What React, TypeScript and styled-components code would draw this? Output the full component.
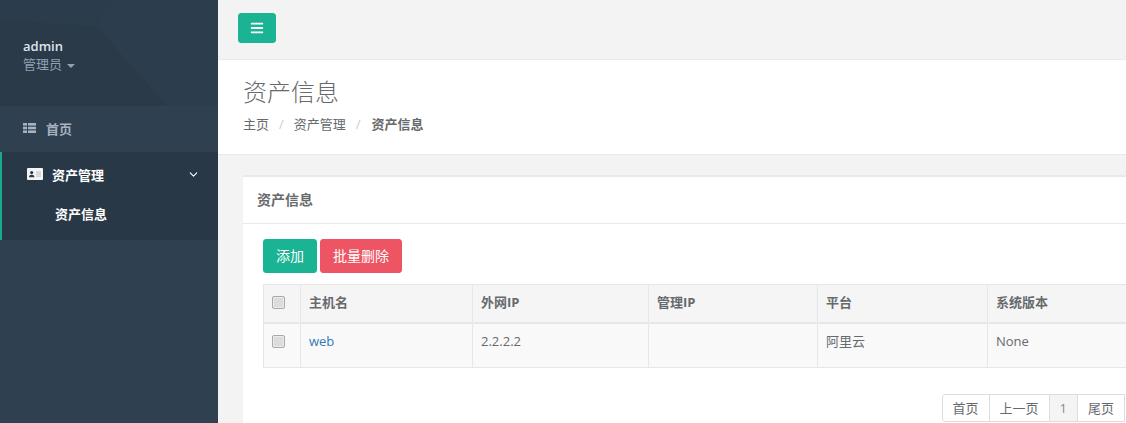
import React from "react";
import styled, { createGlobalStyle } from "styled-components";
import { FaBars } from "react-icons/fa";
import { ChevronDown } from "lucide-react";

const Global = createGlobalStyle`
  html, body { margin: 0; padding: 0; height: 423px; overflow: hidden; background: #2f4050; }
  body { font-family: "Open Sans", "Noto Sans CJK SC", "Liberation Sans", sans-serif; font-size: 13px; color: #676a6c; }
  * { box-sizing: border-box; }
`;

const Shell = styled.div`
  display: flex;
  width: 1126px;
  height: 423px;
  overflow: hidden;
`;

const Sidebar = styled.aside`
  flex: 0 0 218px;
  background: #2f4050;
`;

const Profile = styled.div`
  position: relative;
  height: 106px;
  padding: 38px 0 0 23px;
  background: #2b3c4c;
  overflow: hidden;
`;

const Pattern = styled.svg`
  position: absolute;
  left: 0;
  top: 0;
`;

const UserName = styled.div`
  position: relative;
  color: #dfe4ed;
  font-weight: 600;
  font-size: 13px;
  line-height: 17px;
`;

const Role = styled.div`
  position: relative;
  display: flex;
  align-items: center;
  gap: 5px;
  color: #8fa1b3;
  font-size: 13px;
  line-height: 19px;
`;

const Caret = styled.span`
  width: 0;
  height: 0;
  margin-top: 2px;
  border-left: 4px solid transparent;
  border-right: 4px solid transparent;
  border-top: 4px solid #8fa1b3;
`;

const HomeItem = styled.div`
  height: 46px;
  display: flex;
  align-items: center;
  padding: 0 0 2px 23px;
  gap: 10px;
  color: #a7b1c2;
  font-weight: 600;
`;

const ActiveGroup = styled.div`
  height: 88px;
  background: #293846;
  border-left: 2px solid #19aa8d;
  color: #fff;
  font-weight: 600;
`;

const GroupHead = styled.div`
  height: 46px;
  display: flex;
  align-items: center;
  padding: 0 18px 2px 25px;
  gap: 9px;
`;

const GroupLabel = styled.span`
  flex: 1;
`;

const SubItem = styled.div`
  padding-left: 53px;
  line-height: 18px;
  padding-top: 7px;
`;

const Main = styled.main`
  flex: 1;
  min-width: 0;
  background: #f3f3f4;
`;

const TopBar = styled.div`
  height: 60px;
  padding: 13px 0 0 20px;
  border-bottom: 1px solid #e7eaec;
`;

const MenuButton = styled.button`
  width: 38px;
  height: 30px;
  padding: 0;
  border: 1px solid #1ab394;
  border-radius: 3px;
  background: #1ab394;
  color: #fff;
  display: flex;
  align-items: center;
  justify-content: center;
`;

const Heading = styled.section`
  height: 95px;
  background: #fff;
  padding: 15px 0 0 25px;
  border-bottom: 1px solid #e7eaec;
`;

const Title = styled.h2`
  margin: 0;
  font-size: 24px;
  font-weight: 300;
  line-height: 33px;
  color: #676a6c;
`;

const Crumbs = styled.ol`
  display: flex;
  margin: 7px 0 0;
  padding: 0;
  list-style: none;
  line-height: 18px;
  color: #676a6c;
`;

const Crumb = styled.li<{ $strong?: boolean }>`
  font-weight: ${(p) => (p.$strong ? 700 : 400)};
  margin-left: ${(p) => (p.$strong ? "1px" : "0")};
`;

const Sep = styled.li`
  padding: 0 10px;
  color: #ccc;
`;

const Wrapper = styled.div`
  width: 1000px;
  padding: 20px 0 0 25px;
`;

const Card = styled.section`
  background: #fff;
  border-top: 2px solid #e7eaec;
  height: 300px;
`;

const CardTitle = styled.h5`
  margin: 0;
  height: 47px;
  padding: 0 0 0 14px;
  display: flex;
  align-items: center;
  font-size: 14px;
  font-weight: 600;
  line-height: 20px;
  color: #676a6c;
  border-bottom: 1px solid #e7eaec;
`;

const CardBody = styled.div`
  padding: 15px 0 0 20px;
`;

const Actions = styled.div`
  display: flex;
  gap: 3px;
  margin-bottom: 11px;
`;

const ActionButton = styled.button<{ $tone: string }>`
  height: 34px;
  padding: 0 12px 2px;
  border: 1px solid ${(p) => p.$tone};
  border-radius: 3px;
  background: ${(p) => p.$tone};
  color: #fff;
  font: inherit;
  font-size: 14px;
`;

const Table = styled.table`
  width: 880px;
  table-layout: fixed;
  border-collapse: collapse;
  border: 1px solid #e7e7e7;
`;

const Th = styled.th<{ $w: number }>`
  width: ${(p) => p.$w}px;
  height: 38px;
  padding: 0 8px 4px;
  text-align: left;
  font-weight: 700;
  background: #f5f5f6;
  border: 1px solid #e7e7e7;
  border-bottom-width: 2px;
`;

const Td = styled.td`
  height: 45px;
  padding: 7px 8px 0;
  vertical-align: top;
  background: #f9f9f9;
  border: 1px solid #e7e7e7;
  line-height: 20px;
`;

const Check = styled.input`
  display: block;
  appearance: none;
  width: 13px;
  height: 13px;
  margin: 2px 0 0 0;
  background: #dcdcdc;
  border: 1px solid #a9a9a9;
  border-radius: 2px;
  box-shadow: inset 0 0 0 1px #ececec;
`;

const RowCheck = styled(Check)`
  margin-top: 4px;
`;

const Link = styled.a`
  color: #337ab7;
  text-decoration: none;
`;

const Pager = styled.div`
  display: flex;
  justify-content: flex-end;
  width: 862px;
  margin-top: 26px;
`;

const Page = styled.span<{ $active?: boolean; $first?: boolean }>`
  height: 28px;
  padding: 0 10px 1px;
  display: flex;
  align-items: center;
  border: 1px solid #ddd;
  margin-left: -1px;
  border-radius: ${(p) => (p.$first ? "3px 0 0 3px" : "0")};
  background: ${(p) => (p.$active ? "#f4f4f4" : "#fff")};
  color: ${(p) => (p.$active ? "#8a8a8a" : "#676a6c")};
`;

const columns: [string, number][] = [
  ["主机名", 172],
  ["外网IP", 176],
  ["管理IP", 169],
  ["平台", 170],
  ["系统版本", 156],
];

function ListIcon() {
  return (
    <svg width="13" height="10" viewBox="0 0 13 10" fill="currentColor" aria-hidden="true">
      <rect x="0" y="0" width="4" height="2.6" />
      <rect x="5" y="0" width="8" height="2.6" />
      <rect x="0" y="3.7" width="4" height="2.6" />
      <rect x="5" y="3.7" width="8" height="2.6" />
      <rect x="0" y="7.4" width="4" height="2.6" />
      <rect x="5" y="7.4" width="8" height="2.6" />
    </svg>
  );
}

function IdCardIcon() {
  return (
    <svg width="16" height="12" viewBox="0 0 16 12" aria-hidden="true">
      <rect width="16" height="12" rx="1" fill="#f4f5f6" />
      <circle cx="4.7" cy="4.6" r="1.6" fill="#293846" />
      <path d="M2 9.2c0-1.6 1.2-2.4 2.7-2.4s2.7.8 2.7 2.4z" fill="#293846" />
      <rect x="9" y="3.6" width="5" height="1" fill="#b9bec4" />
      <rect x="9" y="5.6" width="5" height="1" fill="#b9bec4" />
      <rect x="9" y="7.6" width="5" height="1" fill="#b9bec4" />
    </svg>
  );
}

export default function App() {
  return (
    <Shell>
      <Global />
      <Sidebar>
        <Profile>
          <Pattern width="218" height="106" viewBox="0 0 218 106" aria-hidden="true">
            <polygon points="0,0 110,0 97,27 0,20" fill="#2b3c4c" />
            <polygon points="0,20 97,27 168,106 0,106" fill="#2a3a49" />
            <polygon points="110,0 218,0 218,106 168,106 97,27" fill="#2c3e4e" />
          </Pattern>
          <UserName>admin</UserName>
          <Role>
            管理员 <Caret />
          </Role>
        </Profile>
        <HomeItem>
          <ListIcon />
          首页
        </HomeItem>
        <ActiveGroup>
          <GroupHead>
            <IdCardIcon />
            <GroupLabel>资产管理</GroupLabel>
            <ChevronDown size={13} strokeWidth={2} />
          </GroupHead>
          <SubItem>资产信息</SubItem>
        </ActiveGroup>
      </Sidebar>
      <Main>
        <TopBar>
          <MenuButton aria-label="menu">
            <FaBars size={14} />
          </MenuButton>
        </TopBar>
        <Heading>
          <Title>资产信息</Title>
          <Crumbs>
            <Crumb>主页</Crumb>
            <Sep>/</Sep>
            <Crumb>资产管理</Crumb>
            <Sep>/</Sep>
            <Crumb $strong>资产信息</Crumb>
          </Crumbs>
        </Heading>
        <Wrapper>
          <Card>
            <CardTitle>资产信息</CardTitle>
            <CardBody>
              <Actions>
                <ActionButton $tone="#1ab394">添加</ActionButton>
                <ActionButton $tone="#ed5565">批量删除</ActionButton>
              </Actions>
              <Table>
                <thead>
                  <tr>
                    <Th $w={37}>
                      <Check type="checkbox" />
                    </Th>
                    {columns.map(([name, w]) => (
                      <Th key={name} $w={w}>
                        {name}
                      </Th>
                    ))}
                  </tr>
                </thead>
                <tbody>
                  <tr>
                    <Td>
                      <RowCheck type="checkbox" />
                    </Td>
                    <Td>
                      <Link href="#">web</Link>
                    </Td>
                    <Td>2.2.2.2</Td>
                    <Td></Td>
                    <Td>阿里云</Td>
                    <Td>None</Td>
                  </tr>
                </tbody>
              </Table>
              <Pager>
                <Page $first>首页</Page>
                <Page>上一页</Page>
                <Page $active>1</Page>
                <Page>尾页</Page>
              </Pager>
            </CardBody>
          </Card>
        </Wrapper>
      </Main>
    </Shell>
  );
}
